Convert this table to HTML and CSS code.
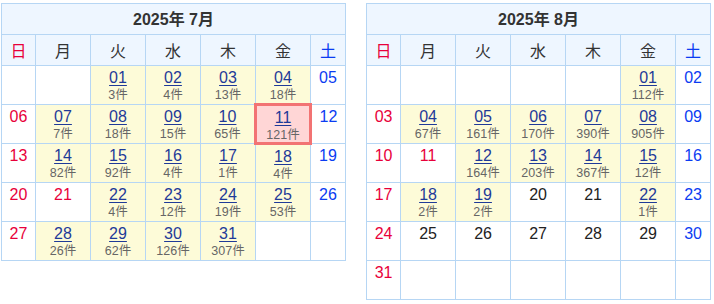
FILE: index.html
```html
<!DOCTYPE html>
<html lang="ja">
<head>
<meta charset="utf-8">
<title>カレンダー</title>
<link rel="stylesheet" href="styles.css">
</head>
<body>
<div class="calendars">
  <table class="cal">
    <colgroup><col class="c-sun"><col class="c-mid"><col class="c-mid"><col class="c-mid"><col class="c-mid"><col class="c-mid"><col class="c-sat"></colgroup>
    <thead>
      <tr class="title-row"><th colspan="7">2025年 7月</th></tr>
      <tr class="wd-row"><th class="sun">日</th><th>月</th><th>火</th><th>水</th><th>木</th><th>金</th><th class="sat">土</th></tr>
    </thead>
    <tbody>
      <tr><td></td><td></td><td class="ev"><a href="#">01</a><span class="cnt">3件</span></td><td class="ev"><a href="#">02</a><span class="cnt">4件</span></td><td class="ev"><a href="#">03</a><span class="cnt">13件</span></td><td class="ev"><a href="#">04</a><span class="cnt">18件</span></td><td class="sat">05</td></tr>
      <tr><td class="sun">06</td><td class="ev"><a href="#">07</a><span class="cnt">7件</span></td><td class="ev"><a href="#">08</a><span class="cnt">18件</span></td><td class="ev"><a href="#">09</a><span class="cnt">15件</span></td><td class="ev"><a href="#">10</a><span class="cnt">65件</span></td><td class="ev today"><a href="#">11</a><span class="cnt">121件</span></td><td class="sat">12</td></tr>
      <tr><td class="sun">13</td><td class="ev"><a href="#">14</a><span class="cnt">82件</span></td><td class="ev"><a href="#">15</a><span class="cnt">92件</span></td><td class="ev"><a href="#">16</a><span class="cnt">4件</span></td><td class="ev"><a href="#">17</a><span class="cnt">1件</span></td><td class="ev"><a href="#">18</a><span class="cnt">4件</span></td><td class="sat">19</td></tr>
      <tr><td class="sun">20</td><td class="sun">21</td><td class="ev"><a href="#">22</a><span class="cnt">4件</span></td><td class="ev"><a href="#">23</a><span class="cnt">12件</span></td><td class="ev"><a href="#">24</a><span class="cnt">19件</span></td><td class="ev"><a href="#">25</a><span class="cnt">53件</span></td><td class="sat">26</td></tr>
      <tr><td class="sun">27</td><td class="ev"><a href="#">28</a><span class="cnt">26件</span></td><td class="ev"><a href="#">29</a><span class="cnt">62件</span></td><td class="ev"><a href="#">30</a><span class="cnt">126件</span></td><td class="ev"><a href="#">31</a><span class="cnt">307件</span></td><td></td><td></td></tr>
    </tbody>
  </table>

  <table class="cal">
    <colgroup><col class="c-sun"><col class="c-mid"><col class="c-mid"><col class="c-mid"><col class="c-mid"><col class="c-mid"><col class="c-sat"></colgroup>
    <thead>
      <tr class="title-row"><th colspan="7">2025年 8月</th></tr>
      <tr class="wd-row"><th class="sun">日</th><th>月</th><th>火</th><th>水</th><th>木</th><th>金</th><th class="sat">土</th></tr>
    </thead>
    <tbody>
      <tr><td></td><td></td><td></td><td></td><td></td><td class="ev"><a href="#">01</a><span class="cnt">112件</span></td><td class="sat">02</td></tr>
      <tr><td class="sun">03</td><td class="ev"><a href="#">04</a><span class="cnt">67件</span></td><td class="ev"><a href="#">05</a><span class="cnt">161件</span></td><td class="ev"><a href="#">06</a><span class="cnt">170件</span></td><td class="ev"><a href="#">07</a><span class="cnt">390件</span></td><td class="ev"><a href="#">08</a><span class="cnt">905件</span></td><td class="sat">09</td></tr>
      <tr><td class="sun">10</td><td class="sun">11</td><td class="ev"><a href="#">12</a><span class="cnt">164件</span></td><td class="ev"><a href="#">13</a><span class="cnt">203件</span></td><td class="ev"><a href="#">14</a><span class="cnt">367件</span></td><td class="ev"><a href="#">15</a><span class="cnt">12件</span></td><td class="sat">16</td></tr>
      <tr><td class="sun">17</td><td class="ev"><a href="#">18</a><span class="cnt">2件</span></td><td class="ev"><a href="#">19</a><span class="cnt">2件</span></td><td>20</td><td>21</td><td class="ev"><a href="#">22</a><span class="cnt">1件</span></td><td class="sat">23</td></tr>
      <tr><td class="sun">24</td><td>25</td><td>26</td><td>27</td><td>28</td><td>29</td><td class="sat">30</td></tr>
      <tr><td class="sun">31</td><td></td><td></td><td></td><td></td><td></td><td></td></tr>
    </tbody>
  </table>
</div>
</body>
</html>
```

FILE: styles.css
```css
html, body {
  margin: 0;
  padding: 0;
  background: #ffffff;
}

body {
  font-family: "Liberation Sans", Arial, "Noto Sans CJK JP", sans-serif;
  color: #222222;
}

.calendars {
  display: flex;
  gap: 20px;
  padding: 3px 0 0 1px;
  align-items: flex-start;
}

.cal {
  border-collapse: collapse;
  table-layout: fixed;
  width: 345px;
}

.c-sun { width: 34px; }
.c-mid { width: 55px; }
.c-sat { width: 35px; }

.cal th,
.cal td {
  border: 1px solid #b6d6f4;
  padding: 0;
  text-align: center;
}

.title-row th {
  height: 28px;
  padding-bottom: 2px;
  background: #eef6ff;
  font-size: 16px;
  font-weight: bold;
  color: #333333;
}

.wd-row th {
  height: 30px;
  background: #eef6ff;
  font-size: 16px;
  font-weight: normal;
  color: #333333;
  font-family: "Noto Sans CJK JP", sans-serif;
  line-height: 18px;
}

.cal tbody td {
  height: 39px;
  vertical-align: top;
  padding-top: 3px;
  font-size: 16px;
  line-height: 18px;
  box-sizing: border-box;
}

.cal .sun { color: #e8003a; }
.cal .sat { color: #0b3cf2; }

.cal td.ev {
  background: #fdfbd8;
}

.cal td.ev a {
  display: inline-block;
  color: #1f3a98;
  text-decoration: underline;
  text-underline-offset: 2px;
}

.cal .cnt {
  display: block;
  font-size: 12.5px;
  line-height: 14px;
  margin-top: 1px;
  color: #666666;
}

.cal td.today {
  background: #ffd6d6;
  border: 3px solid #f27373;
}
```
